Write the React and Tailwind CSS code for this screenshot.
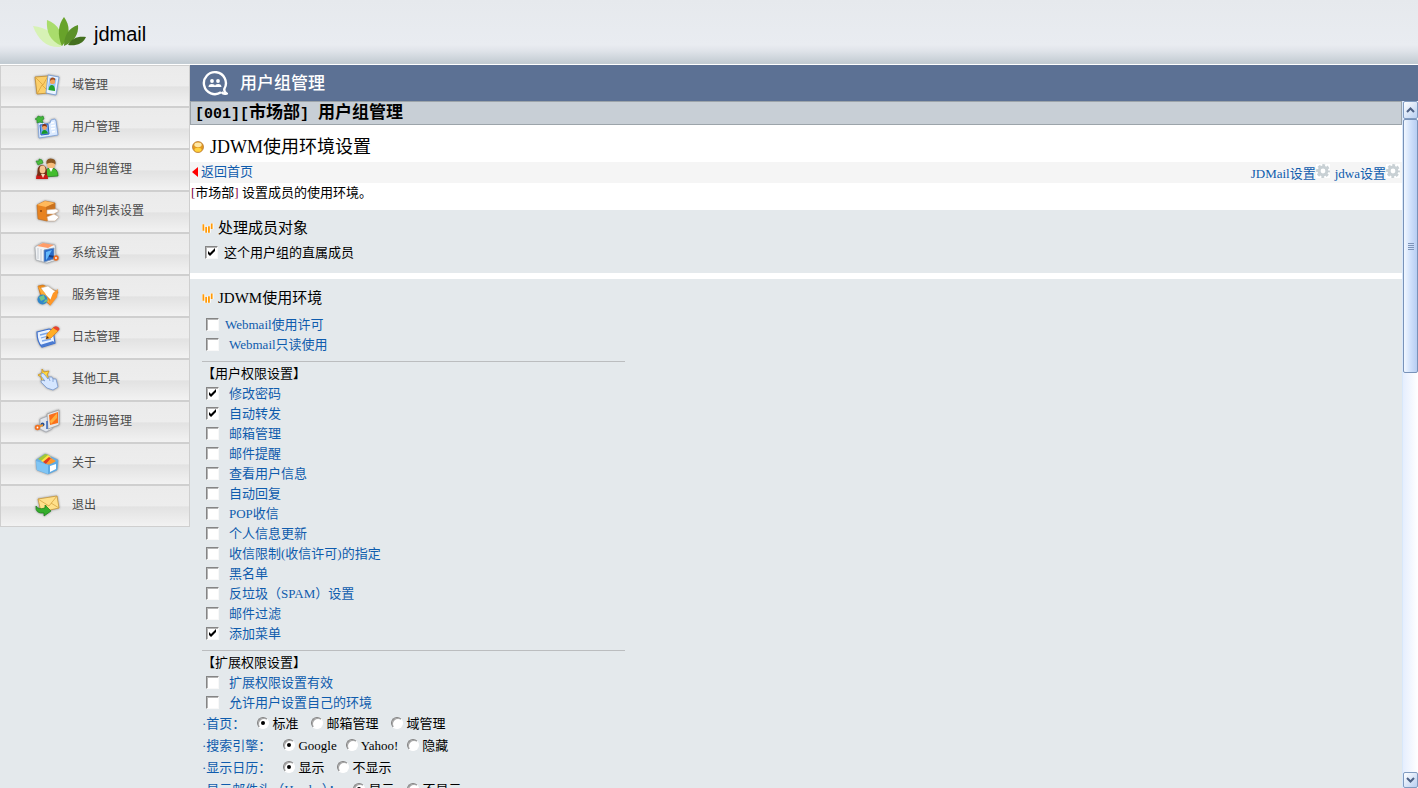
import { useState } from 'react';

const MENU = [
	{ label: '域管理', icon: DomainIcon },
	{ label: '用户管理', icon: UserIcon },
	{ label: '用户组管理', icon: GroupIcon },
	{ label: '邮件列表设置', icon: ListIcon },
	{ label: '系统设置', icon: SystemIcon },
	{ label: '服务管理', icon: ServiceIcon },
	{ label: '日志管理', icon: LogIcon },
	{ label: '其他工具', icon: ToolsIcon },
	{ label: '注册码管理', icon: LicenseIcon },
	{ label: '关于', icon: AboutIcon },
	{ label: '退出', icon: ExitIcon },
];

const USER_RIGHTS = [
	{ label: '修改密码', on: true },
	{ label: '自动转发', on: true },
	{ label: '邮箱管理' },
	{ label: '邮件提醒' },
	{ label: '查看用户信息' },
	{ label: '自动回复' },
	{ label: 'POP收信' },
	{ label: '个人信息更新' },
	{ label: '收信限制(收信许可)的指定' },
	{ label: '黑名单' },
	{ label: '反垃圾（SPAM）设置' },
	{ label: '邮件过滤' },
	{ label: '添加菜单', on: true },
];

const EXT_RIGHTS = [{ label: '扩展权限设置有效' }, { label: '允许用户设置自己的环境' }];

const CHOICES = [
	{ name: 'home', label: '首页', options: ['标准', '邮箱管理', '域管理'], gap: 'gap-[13px]' },
	{ name: 'search', label: '搜索引擎', options: ['Google', 'Yahoo!', '隐藏'], gap: 'gap-[9px]' },
	{ name: 'calendar', label: '显示日历', options: ['显示', '不显示'], gap: 'gap-[13px]' },
	{ name: 'mailheader', label: '显示邮件头（Header）', options: ['显示', '不显示'], gap: 'gap-[13px]' },
];

function Icon({ children }) {
	return (
		<svg viewBox="0 0 28 28" className="h-7 w-7 shrink-0 drop-shadow-[0_0_1px_#888]" aria-hidden="true">
			{children}
		</svg>
	);
}

function DomainIcon() {
	return (
		<Icon>
			<path d="M2 7l13-1 1 17-12 1z" fill="#fbcf6a" stroke="#c08c30" strokeWidth=".8" />
			<path d="M2 7l8 8 5-9M4 24l5-9 6 6" fill="none" stroke="#dba23a" strokeWidth=".8" />
			<path d="M15 5l11 2-3 18-10-2z" fill="#e9f3ff" stroke="#6f98d4" strokeWidth=".8" />
			<path d="M16.500 7.500l7 1.200-2 12-7-1.200z" fill="#9cc7fa" />
			<circle cx="19.500" cy="11.500" r="2.600" fill="#f3a35c" />
			<path d="M17 11q0-4 3-3.500 3 .5 2 3-2-2-5 .5z" fill="#a04a1c" />
			<path d="M15.500 20q.5-5 3.500-5t3 6z" fill="#24a42a" />
		</Icon>
	);
}

function UserIcon() {
	return (
		<Icon>
			<path d="M5 11l5-1 2 2 5-1 1-3 4-1 1 2 2 14-19 3z" fill="#dbeaff" stroke="#7a9fda" strokeWidth=".8" />
			<path d="M7 13l8-1 1 10-8 1z" fill="#76aaf0" stroke="#2d62bd" />
			<circle cx="11.500" cy="15.500" r="2.400" fill="#f0a060" />
			<path d="M9 15q0-3 2.500-3t2.500 3q-3-2-5 0z" fill="#8b3514" />
			<path d="M8.500 22q.5-4 3-4t3.500 3.500z" fill="#179827" />
			<path d="M18 11l3-.5M18 14l4-.5M18 17l4-.5M19 20l3-.5" stroke="#fff" strokeWidth="1.500" />
			<path d="M5 4l3 1 2-1 1 3-2 1 1 3-3-1-3 1V8L2 7l2-1z" fill="#43b83a" stroke="#238728" strokeWidth=".6" />
		</Icon>
	);
}

function GroupIcon() {
	return (
		<Icon>
			<path d="M11 23q0-9 7-9t7 8z" fill="#42bd2d" stroke="#227a1c" strokeWidth=".7" />
			<circle cx="18" cy="10.500" r="4" fill="#f7bd7b" />
			<path d="M13.500 10q-1-5 4-5.500 6 0 5 6-3-3-9-.5z" fill="#8b5721" />
			<path d="M16 14l2 4 2-4z" fill="#fff" />
			<path d="M3 25q0-7 6-7t6 7z" fill="#cc1717" />
			<path d="M4.500 22q-1-11 4.500-11t5 10z" fill="#743015" />
			<ellipse cx="9.500" cy="15.500" rx="3" ry="4" fill="#f6c591" />
			<path d="M8 20l2 4 2-4z" fill="#f9d9bd" />
			<path d="M6 5l3 1 1 3-3 1-2 1-1-2-1-2 3 0z" fill="#4cbd3c" stroke="#268829" strokeWidth=".6" />
		</Icon>
	);
}

function ListIcon() {
	return (
		<Icon>
			<path d="M4 9l8-4 10 2v13l-8 5-9-2z" fill="#e8831f" stroke="#b96a20" strokeWidth=".6" />
			<path d="M4 9l8-4 10 2-9 4z" fill="#ffb95b" />
			<path d="M13 11l9-4v13l-8 5z" fill="#c9721f" />
			<circle cx="8" cy="15" r="1" fill="#8b4412" />
			<path d="M14 14l9-1 3 2-5 3-7 0z" fill="#fff" stroke="#d5b59a" strokeWidth=".6" />
			<path d="M14 21l7-3 5 3-4 4h-7z" fill="#fff" stroke="#d5b59a" strokeWidth=".6" />
		</Icon>
	);
}

function SystemIcon() {
	return (
		<Icon>
			<path d="M2 9l7-4 13 2 1 15-9 3-11-3z" fill="#f2f4f6" stroke="#a0a6ad" strokeWidth=".6" />
			<path d="M4 8l6-3 11 2-6 3z" fill="#ff9d69" />
			<path d="M5 10v11M8 11v12" stroke="#c4cad2" />
			<path d="M11 12l10-2v11l-10 3z" fill="#276bca" stroke="#7c94b8" strokeWidth=".8" />
			<path d="M13 14l6-2-5 9-1 1z" fill="#65b9fb" />
			<path d="M16 18l6 1" stroke="#173d80" strokeWidth="2" />
			<circle cx="23" cy="20" r="1.800" fill="#fff" stroke="#ef6c20" strokeWidth="1.800" />
		</Icon>
	);
}

function ServiceIcon() {
	return (
		<Icon>
			<path d="M5 6l5-1 15 7-8 13-9-8z" fill="#f18b17" stroke="#c36608" strokeWidth=".5" />
			<path d="M8 8l7-2 8 6-4 9-7-7z" fill="#fff" stroke="#cbbca6" strokeWidth=".6" />
			<path d="M5 6l7 7 6 12-8-7z" fill="#ffac37" />
			<path d="M20 13l5-4-1 8-7 9-1-3z" fill="#ff9728" />
			<circle cx="9.500" cy="19.500" r="5" fill="#3187cb" />
			<path d="M6 17l5-2 1 4-4 2zM10 23l3-4 2 2z" fill="#72c58a" />
		</Icon>
	);
}

function LogIcon() {
	return (
		<Icon>
			<path d="M4 10l12-3 4 1 2 13-13 4q-5-5-5-15z" fill="#e9f2ff" stroke="#3e70ce" strokeWidth="1.200" />
			<path d="M7 13l8-2M8 16l7-2M9 19l9-2" stroke="#7ca7ec" strokeWidth="1.300" />
			<path d="M7 23l13-4 2 2-13 4z" fill="#4a7bd2" />
			<path d="M13 17l1-5 7-7 4 4-7 7z" fill="#ffad26" stroke="#d87311" strokeWidth=".6" />
			<path d="M20 6q2-3 5-1t0 4z" fill="#e6422f" />
			<path d="M13 17l1-3 2 2z" fill="#503319" />
		</Icon>
	);
}

function ToolsIcon() {
	return (
		<Icon>
			<path d="M9 5l2 3 5-1-2 4 2 3-4 0-3 4-1-5-3-2 4-2z" fill="#ffd943" stroke="#c88c13" strokeWidth=".7" />
			<path d="M8 10q2-2 4 1l3 4 1-2 3 0 1 2 3 0 2 8-5 3-6-2-6-6q0-3 4-1l-4-5z" fill="#d5e6ff" stroke="#799bd2" strokeWidth=".8" />
			<path d="M16 14l1 3M20 15l0 3" stroke="#8cabdc" />
		</Icon>
	);
}

function LicenseIcon() {
	return (
		<Icon>
			<path d="M7 13l8-3 5 3-1 10-6 3-6-3z" fill="#e2e6ed" stroke="#9da2aa" strokeWidth=".7" />
			<path d="M14 8l12-4v15l-11 4z" fill="#e7e7e7" stroke="#9f9f9f" strokeWidth=".8" />
			<path d="M16 9l9-3v11l-8 2z" fill="#fb701a" />
			<path d="M17 15l7-8v5l-6 6z" fill="#ffb03d" />
			<path d="M14 15l0 8" stroke="#3265bd" strokeWidth="1.500" />
			<circle cx="9.500" cy="18.500" r="2" fill="#284f91" />
			<path d="M5 21l5-2" stroke="#ee9a32" strokeWidth="2" />
			<circle cx="4.500" cy="21.500" r="1.800" fill="#fff" stroke="#f17222" strokeWidth="1.800" />
		</Icon>
	);
}

function AboutIcon() {
	return (
		<Icon>
			<path d="M3 12l9-6 13 6-1 10-9 4-11-4z" fill="#69afe6" stroke="#6ba9d8" strokeWidth=".6" />
			<path d="M5 11l7-5 4 1-7 6z" fill="#a5c935" />
			<path d="M8 13l7-6 3 2-6 6z" fill="#ffe044" />
			<path d="M10 14l6-5 3 2-6 5z" fill="#df3a22" />
			<path d="M13 16l5-6 5 3-6 4z" fill="#ff982c" />
			<path d="M3 13l12 4v9l-11-4z" fill="#80c5f4" />
			<path d="M15 17l10-4-1 9-9 4z" fill="#5fabe4" />
			<path d="M17 18l6-2v5l-6 3z" fill="#fff" />
		</Icon>
	);
}

function ExitIcon() {
	return (
		<Icon>
			<path d="M5 9l19-3 2 12-18 4z" fill="#ffe08a" stroke="#c6973c" strokeWidth=".8" />
			<path d="M5 9l11 7 8-10M8 22l6-7M26 18l-8-5" fill="none" stroke="#d7a442" strokeWidth=".8" />
			<path d="M3 16q2 4 9 2l0-3 6 6-7 5v-3q-9 1-8-7z" fill="#35ae2c" stroke="#187e19" strokeWidth=".7" />
		</Icon>
	);
}

function LeafLogo() {
	return (
		<svg viewBox="0 0 54 32" className="h-8 w-[54px]" aria-hidden="true">
			<path d="M28 31C14 32 5 24 0 10c13 1 23 8 28 21z" fill="#d7f2b5" />
			<path d="M29 30C17 25 13 16 14 4c11 4 17 14 15 26z" fill="#a9dc6c" />
			<path d="M29 30C24 19 25 9 31 1c6 8 7 19-2 29z" fill="#68a32a" />
			<path d="M31 30c0-11 5-18 14-21 1 9-4 17-14 21z" fill="#5b9128" />
			<path d="M35 29c4-7 10-9 18-8-3 7-10 9-18 8z" fill="#44701f" />
		</svg>
	);
}

function BarsMark() {
	return (
		<svg viewBox="0 0 13 13" className="h-[13px] w-3 shrink-0" aria-hidden="true">
			<path d="M1.500 2v7M4.500 5v6M7.500 4v7M10.500 1v6" stroke="#fff" strokeWidth="4" />
			<path d="M1.500 2v7M4.500 5v6M7.500 4v7M10.500 1v6" stroke="#ff9a08" strokeWidth="2" />
		</svg>
	);
}

function Gear() {
	return (
		<svg viewBox="0 0 14 14" className="mb-1.5 h-3.5 w-3.5 bg-white" aria-hidden="true">
			<circle cx="7" cy="7" r="5.800" fill="none" stroke="#c8d0d4" strokeWidth="2.200" strokeDasharray="2.800 1.755" strokeDashoffset="1.400" />
			<circle cx="7" cy="7" r="3.900" fill="none" stroke="#c8d0d4" strokeWidth="3" />
		</svg>
	);
}

function Check({ label, on = false, gap = 'gap-2.5', color = 'text-[#0f5cad]' }) {
	return (
		<label className={`flex h-5 w-fit items-center ${gap} ${color}`}>
			<span className="grid pb-0.5">
				<input
					type="checkbox"
					defaultChecked={on}
					className="peer col-start-1 row-start-1 h-[13px] w-[13px] appearance-none border border-[#f8f8f8] border-t-[#858585] border-l-[#858585] bg-white shadow-[inset_1px_1px_0_#b5b5b5]"
				/>
				<svg viewBox="0 0 13 13" className="pointer-events-none invisible col-start-1 row-start-1 h-[13px] w-[13px] peer-checked:visible" aria-hidden="true">
					<path d="M3 5v3l2 2 5-5V2L5 7z" fill="#000" />
				</svg>
			</span>
			{label}
		</label>
	);
}

function RadioRow({ name, label, options, gap }) {
	const [value, setValue] = useState(options[0]);
	return (
		<fieldset className="flex h-[22px] items-center gap-3">
			<legend className="contents">
				<span className="text-[#0f5cad]">·{label}：</span>
			</legend>
			<div className={`flex items-center ${gap}`}>
				{options.map((option) => (
					<label key={option} className="flex items-center gap-[3px]">
						<input
							type="radio"
							name={name}
							checked={value === option}
							onChange={() => setValue(option)}
							className="mb-0.5 grid h-3 w-3 appearance-none place-content-center rounded-full border border-white border-t-[#808080] border-l-[#808080] bg-white shadow-[inset_1px_1px_0_#a5a5a5] before:h-1 before:w-1 before:rounded-full checked:before:bg-black"
						/>
						{option}
					</label>
				))}
			</div>
		</fieldset>
	);
}

function Sidebar() {
	return (
		<nav className="w-[190px] shrink-0 font-['Noto_Sans_CJK_SC',sans-serif] text-xs text-[#4a4a4a]">
			{MENU.map(({ label, icon: MenuIcon }) => (
				<a
					key={label}
					href="#"
					className="flex h-[42px] items-center gap-[11px] border border-[#cfcfcf] bg-[linear-gradient(#ebebeb_0,#ededed_50%,#e2e2e2_52%,#f2f2f2_100%)] pb-1 pl-8"
				>
					<MenuIcon />
					{label}
				</a>
			))}
		</nav>
	);
}

function ScrollBar() {
	return (
		<div className="flex w-4 shrink-0 flex-col border-l border-[#d8e8fb] bg-gradient-to-r from-[#e5eefe] to-white">
			<button type="button" aria-label="向上滚动" className="grid h-[18px] place-items-center rounded-xs border border-[#809bc0] bg-gradient-to-br from-white to-[#b8cff1]">
				<svg viewBox="0 0 9 6" className="h-1.5 w-[9px]" aria-hidden="true">
					<path d="M1 5l3.500-3.500L8 5" fill="none" stroke="#4d6185" strokeWidth="2" />
				</svg>
			</button>
			<div className="grid h-[37%] place-content-center gap-px rounded-xs border border-[#7892b8] bg-gradient-to-r from-[#f1f7ff] via-[#d0e1fb] to-[#b7cdf2]">
				<i className="h-px w-1.5 bg-[#7d94b8]" />
				<i className="h-px w-1.5 bg-[#7d94b8]" />
				<i className="h-px w-1.5 bg-[#7d94b8]" />
				<i className="h-px w-1.5 bg-[#7d94b8]" />
			</div>
			<button type="button" aria-label="向下滚动" className="mt-auto grid h-4 place-items-center rounded-xs border border-[#809bc0] bg-gradient-to-br from-white to-[#b8cff1]">
				<svg viewBox="0 0 9 6" className="h-1.5 w-[9px]" aria-hidden="true">
					<path d="M1 1l3.500 3.500L8 1" fill="none" stroke="#4d6185" strokeWidth="2" />
				</svg>
			</button>
		</div>
	);
}

export default function App() {
	return (
		<div className="flex h-screen flex-col overflow-hidden bg-[#e4e9ec] font-['Liberation_Serif','Noto_Sans_CJK_SC',serif] text-[13px] leading-5 text-black">
			<header className="flex h-[65px] shrink-0 items-center gap-[7px] border-b border-white bg-[linear-gradient(#e6e9ed_0,#e9ecf1_70%,#dfe3e9_80%,#c3ccd3_98%)] pl-[33px] font-['Liberation_Sans',sans-serif]">
				<LeafLogo />
				<span className="pt-1 text-xl">jdmail</span>
			</header>
			<div className="flex min-h-0 flex-1">
				<Sidebar />
				<div className="flex min-w-0 flex-1 flex-col">
					<div className="flex h-9 shrink-0 items-center gap-3 bg-[#5c7194] pl-3 font-['Noto_Sans_CJK_SC',sans-serif] text-[17px] font-medium text-white">
						<svg viewBox="0 0 26 26" className="h-[26px] w-[26px]" aria-hidden="true">
							<path d="M19 22.300a11 11 0 1 1 3.500-3.800q-1 3 2 5-3 1-5-1.500" fill="none" stroke="#fff" strokeWidth="2.400" />
							<circle cx="10" cy="11" r="1.900" fill="#fff" />
							<circle cx="16" cy="11" r="1.900" fill="#fff" />
							<path d="M6.500 17q0-3 3.300-3t3.200 2q0-2 3.200-2t3.300 3z" fill="#fff" />
						</svg>
						<h1 className="pb-0.5">用户组管理</h1>
					</div>
					<div className="flex min-h-0 flex-1">
						<main className="min-w-0 flex-1 overflow-hidden bg-white">
							<h2 className="flex h-6 items-baseline border border-[#9ca4aa] bg-[#c8cfd6] pt-0.5 pl-1 font-['Liberation_Mono','Noto_Sans_CJK_SC',monospace] text-[15px] font-bold whitespace-pre">
								[001][<span className="text-[17px]">市场部</span>] <span className="text-[17px]">用户组管理</span>
							</h2>
							<div className="flex items-center gap-1.5 px-0.5 pt-3 pb-[5px]">
								<svg viewBox="0 0 12 12" className="h-3 w-3" aria-hidden="true">
									<circle cx="6" cy="6" r="5.500" fill="#e39a20" stroke="#b0702a" strokeWidth=".7" />
									<ellipse cx="6" cy="3.800" rx="3.700" ry="2.400" fill="#ffe7a5" />
									<ellipse cx="6" cy="8.800" rx="3.500" ry="2" fill="#ffd23e" />
								</svg>
								<h3 className="text-lg leading-5">JDWM使用环境设置</h3>
							</div>
							<div className="flex h-[21px] items-center justify-between bg-[#f5f5f5] px-0.5 text-[#0f5cad]">
								<a href="#" className="flex items-center gap-[3px] pb-0.5">
									<svg viewBox="0 0 6 10" className="h-2.5 w-1.5" aria-hidden="true">
										<path d="M6 0v10L0 5z" fill="#f00" />
									</svg>
									返回首页
								</a>
								<div className="flex gap-[5px] pt-0.5">
									<a href="#" className="flex items-center">JDMail设置<Gear /></a>
									<a href="#" className="flex items-center">jdwa设置<Gear /></a>
								</div>
							</div>
							<p className="pb-[7px] pl-px">
								<span className="text-[#800040]">[</span>市场部<span className="text-[#800040]">]</span> 设置成员的使用环境。
							</p>
							<section className="border-b-6 border-white bg-[#e4e9ec] px-3 pt-2 pb-2.5">
								<h4 className="flex items-center gap-1 text-[15px]">
									<BarsMark />
									处理成员对象
								</h4>
								<div className="pt-[5px] pl-[3px]">
									<Check label="这个用户组的直属成员" on gap="gap-1.5" color="text-black" />
								</div>
							</section>
							<section className="bg-[#e4e9ec] px-3 pt-[9px]">
								<h4 className="flex items-center gap-1 text-[15px]">
									<BarsMark />
									JDWM使用环境
								</h4>
								<div className="pt-[7px] pl-1">
									<Check label="Webmail使用许可" gap="gap-1.5" />
									<Check label="Webmail只读使用" />
								</div>
								<hr className="mt-1.5 mb-0.5 w-full max-w-[423px] border-[#bbbdbf]" />
								<h5>【用户权限设置】</h5>
								<div className="pl-1">
									{USER_RIGHTS.map((item) => <Check key={item.label} {...item} />)}
								</div>
								<hr className="mt-1.5 mb-0.5 w-full max-w-[423px] border-[#bbbdbf]" />
								<h5>【扩展权限设置】</h5>
								<div className="pl-1">
									{EXT_RIGHTS.map((item) => <Check key={item.label} {...item} />)}
								</div>
								{CHOICES.map((row) => <RadioRow key={row.name} {...row} />)}
							</section>
						</main>
						<ScrollBar />
					</div>
				</div>
			</div>
		</div>
	);
}
